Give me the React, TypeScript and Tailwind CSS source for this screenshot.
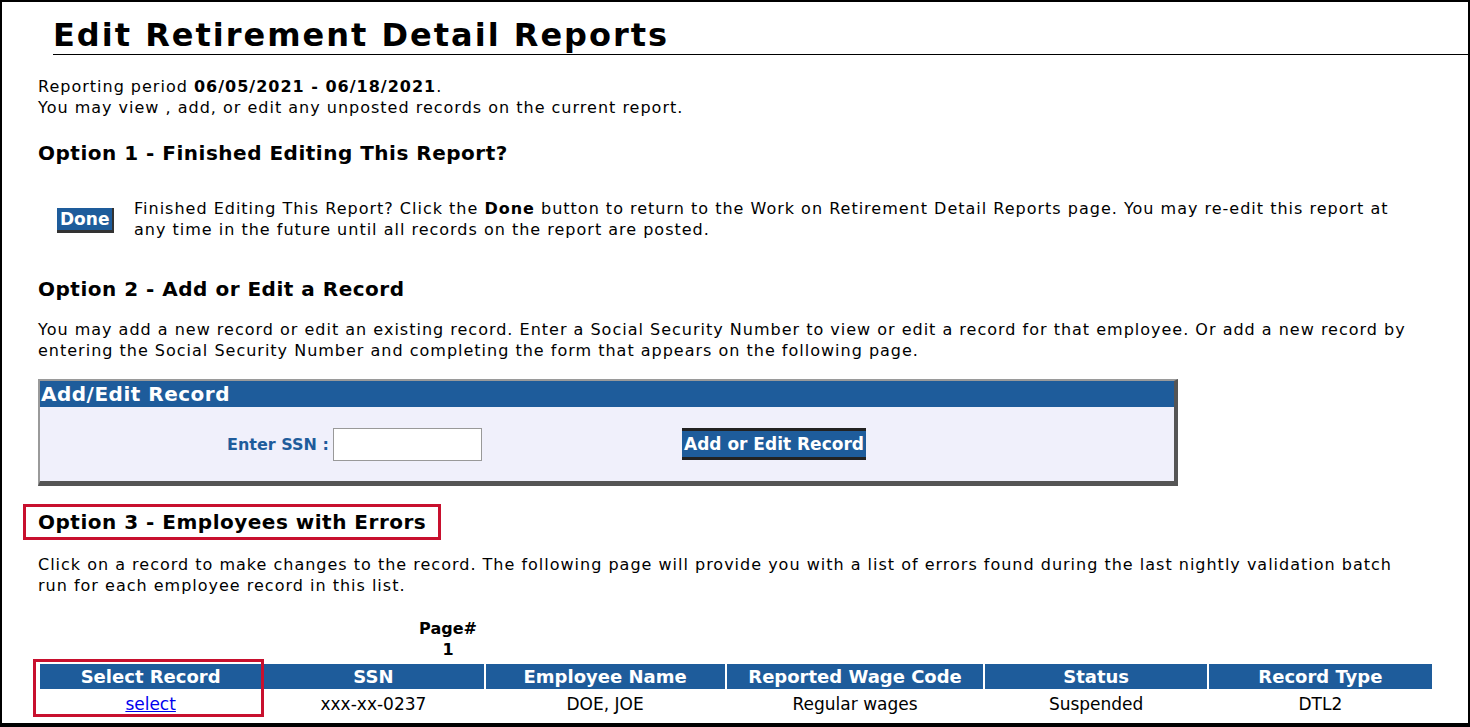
const blue = "bg-[#1e5c9b]";

const cols = [
  { h: "Select Record", v: "select", w: "w-[224px]" },
  { h: "SSN", v: "xxx-xx-0237", w: "w-[223px]" },
  { h: "Employee Name", v: "DOE, JOE", w: "w-[242px]" },
  { h: "Reported Wage Code", v: "Regular wages", w: "w-[260px]" },
  { h: "Status", v: "Suspended", w: "w-[224px]" },
  { h: "Record Type", v: "DTL2", w: "w-[226px]" },
];

const App = () => {
  return (
    <div className="w-[1470px] h-[727px] bg-black p-[2px] pb-[4px] overflow-hidden">
      <div className="h-full bg-white text-black text-[16px] leading-[21px] tracking-[1px] overflow-hidden" style={{ fontFamily: '"DejaVu Sans", Verdana, sans-serif' }}>
        <div className="pl-[51px] pt-[14px]">
          <h1 className="text-[32px] leading-[38px] font-bold tracking-[2px] border-b border-black">Edit Retirement Detail Reports</h1>
        </div>
        <div className="px-[36px] pt-[21px]">
          <p>Reporting period <b>06/05/2021 - 06/18/2021</b>.</p>
          <p>You may view , add, or edit any unposted records on the current report.</p>
          <h2 className="text-[20px] leading-[26px] font-bold tracking-[0.5px] mt-[22px]">Option 1 - Finished Editing This Report?</h2>
          <div className="flex items-start mt-[32px]">
            <div className="ml-[19px] mt-[10px] w-[57px] shrink-0">
              <span className={`inline-block ${blue} text-white font-bold text-[17px] leading-[22px] tracking-normal px-[3px] border-b-[3px] border-r-[2px] border-[#333]`}>Done</span>
            </div>
            <p className="ml-[20px] pr-[8px]">Finished Editing This Report? Click the <b>Done</b> button to return to the Work on Retirement Detail Reports page. You may re-edit this report at any time in the future until all records on the report are posted.</p>
          </div>
          <h2 className="text-[20px] leading-[26px] font-bold tracking-[0.5px] mt-[36px]">Option 2 - Add or Edit a Record</h2>
          <p className="mt-[17px] pr-[20px]">You may add a new record or edit an existing record. Enter a Social Security Number to view or edit a record for that employee. Or add a new record by entering the Social Security Number and completing the form that appears on the following page.</p>
          <div className="mt-[18px] w-[1140px] border-t-2 border-l-2 border-[#9a9a9a] border-r-[4px] border-b-[5px] border-r-[#555] border-b-[#555]">
            <div className={`${blue} text-white font-bold text-[20px] leading-[26px] tracking-[0.5px] pl-[1px]`}>Add/Edit Record</div>
            <div className="bg-[#f0f0fb] h-[74px] flex items-center">
              <span className="ml-[187px] text-[#1e5c9b] font-bold tracking-normal">Enter SSN :</span>
              <input className="ml-[4px] w-[149px] h-[33px] border border-[#999] bg-white" />
              <span className={`ml-[200px] ${blue} text-white font-bold text-[17px] leading-[26px] tracking-normal px-[2px] border-t-[3px] border-b-[3px] border-[#222]`}>Add or Edit Record</span>
            </div>
          </div>
          <div className="mt-[18px] -ml-[15px] inline-block border-[3px] border-[#c8102e] px-[12px] py-[2px]">
            <h2 className="text-[20px] leading-[26px] font-bold tracking-[0.5px]">Option 3 - Employees with Errors</h2>
          </div>
          <p className="mt-[14px] pr-[20px]">Click on a record to make changes to the record. The following page will provide you with a list of errors found during the last nightly validation batch run for each employee record in this list.</p>
          <div className="ml-[375px] mt-[22px] w-[70px] text-center font-bold text-[16px] leading-[21px] tracking-normal">
            <div>Page#</div>
            <div>1</div>
          </div>
          <div className="flex gap-[2px] mt-[4px] ml-[2px] relative tracking-normal">
            {cols.map((c, i) => (
              <div key={c.h} className={c.w}>
                <div className={`${blue} text-white font-bold text-[18px] leading-[25px] text-center`}>{c.h}</div>
                <div className="text-center leading-[30px] text-[17px]">
                  {i === 0 ? <a className="text-[#0000ee] underline">select</a> : c.v}
                </div>
              </div>
            ))}
            <div className="absolute -left-[7px] -top-[5px] w-[231px] h-[58px] border-[3px] border-[#c8102e]" />
          </div>
        </div>
      </div>
    </div>
  );
};

export default App;
